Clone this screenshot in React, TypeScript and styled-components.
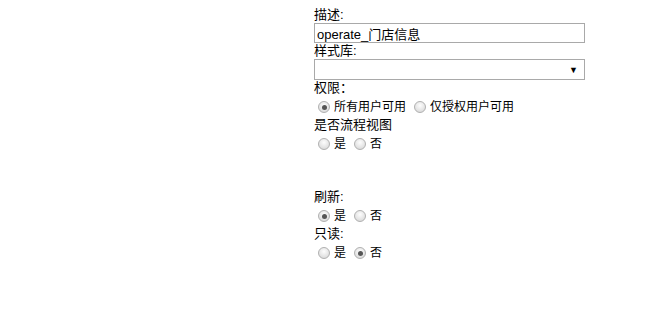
import React from 'react';
import styled, { createGlobalStyle } from 'styled-components';

const GlobalStyle = createGlobalStyle`
  body {
    margin: 0;
    background: #ffffff;
    font-family: "Liberation Sans", Arial, "Noto Sans CJK SC", sans-serif;
    color: #000;
  }
`;

interface IRadioGroup {
  name: string,
  options: string[],
  checked: number | null
}

const RadioGroup = (props: IRadioGroup) => {
  return (
    <RadioRow>
      {props.options.map((opt, i) => (
        <Option key={opt}>
          <Radio type="radio" name={props.name} defaultChecked={props.checked === i} />
          {opt}
        </Option>
      ))}
    </RadioRow>
  );
};

const App = () => {
  return (
    <Page>
      <GlobalStyle />
      <Form>
        <Label>描述:</Label>
        <TextInput defaultValue="operate_门店信息" />
        <Label>样式库:</Label>
        <SelectBox>
          <Arrow>▼</Arrow>
        </SelectBox>
        <Label>权限：</Label>
        <RadioGroup name="perm" options={['所有用户可用', '仅授权用户可用']} checked={0} />
        <Label>是否流程视图</Label>
        <RadioGroup name="flow" options={['是', '否']} checked={null} />
        <Spacer />
        <Label>刷新:</Label>
        <RadioGroup name="refresh" options={['是', '否']} checked={0} />
        <Label>只读:</Label>
        <RadioGroup name="readonly" options={['是', '否']} checked={1} />
      </Form>
    </Page>
  );
};

const Page = styled.div`
  width: 668px;
  height: 331px;
  padding: 7px 0 0 314px;
  box-sizing: border-box;
`;
const Form = styled.div`
  width: 271px;
  display: flex;
  flex-direction: column;
`;
const Label = styled.div`
  font-size: 13px;
  line-height: 16px;
  height: 16px;
`;
const TextInput = styled.input`
  box-sizing: border-box;
  width: 271px;
  height: 20px;
  border: 1px solid #a9a9a9;
  padding: 0 2px;
  font-size: 13px;
  font-family: "Liberation Sans", Arial, "Noto Sans CJK SC", sans-serif;
  color: #000;
  outline: none;
  margin: 0;
`;
const SelectBox = styled.div`
  box-sizing: border-box;
  width: 271px;
  height: 21px;
  border: 1px solid #a9a9a9;
  display: flex;
  align-items: center;
  justify-content: flex-end;
  padding-right: 6px;
`;
const Arrow = styled.span`
  font-size: 9px;
  color: #000;
`;
const RadioRow = styled.div`
  display: flex;
  align-items: flex-start;
  height: 21px;
  padding: 5px 0 0 4px;
  box-sizing: border-box;
  gap: 8px;
`;
const Option = styled.label`
  display: flex;
  align-items: center;
  gap: 4px;
  font-size: 12px;
  line-height: 14px;
  margin-top: -1px;
`;
const Radio = styled.input`
  appearance: none;
  margin: 0;
  width: 12px;
  height: 12px;
  border-radius: 50%;
  border: 1px solid #b0b0b0;
  background: radial-gradient(circle at 50% 35%, #fdfdfd 0%, #e6e6e6 55%, #d2d2d2 100%);
  box-sizing: border-box;
  position: relative;
  &:checked::after {
    content: '';
    position: absolute;
    left: 2.5px;
    top: 2.5px;
    width: 5px;
    height: 5px;
    border-radius: 50%;
    background: #555;
  }
`;
const Spacer = styled.div`
  height: 35px;
`;

export default App;
